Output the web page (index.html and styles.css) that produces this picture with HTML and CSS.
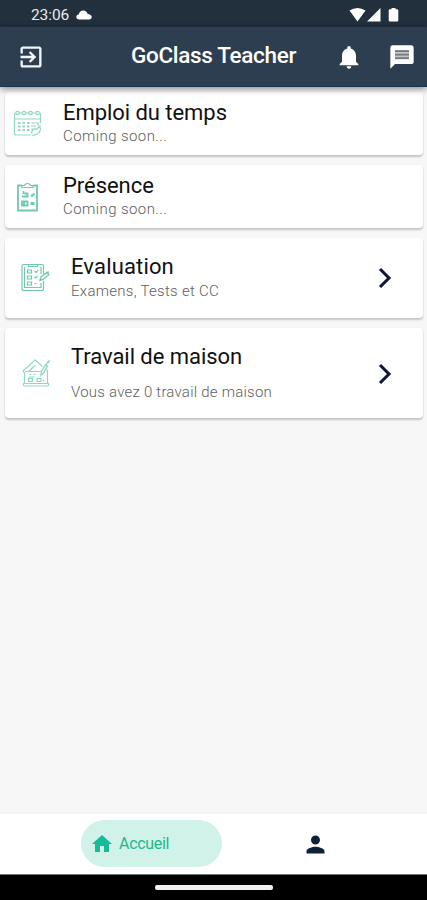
FILE: index.html
```html
<!DOCTYPE html>
<html lang="fr">
<head>
<meta charset="utf-8">
<title>GoClass Teacher</title>
<link rel="stylesheet" href="styles.css">
</head>
<body>
<div class="screen">
  <div class="status">
    <span class="clock">23:06</span>
    <svg class="cloud" viewBox="0 0 16 10"><path d="M3.3 9.5C1.5 9.5.3 8.500.3 7 .3 5.700 1.300 4.700 2.700 4.500 3.300 2 5 .500 7.300.500c2.200 0 3.800 1.400 4.300 3.400 2.300.1 4.100 1.200 4.100 3.100 0 1.500-1 2.500-2.600 2.500z"/></svg>
    <svg class="signals" viewBox="0 0 50 16"><path d="M.5 3.500Q8.500-1.500 16.500 3.500L8.500 14.500zM31.500 1v13.500H18zM41 2.300h1.500V1h4v1.300h1.500q1.300 0 1.300 1.300v9.600q0 1.300-1.300 1.300h-7q-1.300 0-1.300-1.300V3.600q0-1.300 1.300-1.300z"/></svg>
  </div>
  <header class="appbar">
    <svg class="icon exit" viewBox="0 0 24 24"><path d="M10.090 15.590L11.500 17l5-5-5-5-1.410 1.410L12.670 11H3v2h9.670l-2.580 2.590zM19 3H5c-1.110 0-2 .9-2 2v4h2V5h14v14H5v-4H3v4c0 1.100.89 2 2 2h14c1.100 0 2-.9 2-2V5c0-1.100-.9-2-2-2z"/></svg>
    <h1>GoClass Teacher</h1>
    <svg class="icon bell" viewBox="0 0 24 24"><path d="M12 22c1.100 0 2-.9 2-2h-4c0 1.100.89 2 2 2zm6-6v-5c0-3.070-1.640-5.640-4.500-6.320V4c0-.83-.67-1.500-1.500-1.500s-1.500.67-1.500 1.500v.68C7.630 5.360 6 7.920 6 11v5l-2 2v1h16v-1l-2-2z"/></svg>
    <svg class="icon" viewBox="0 0 24 24"><path d="M20 2H4c-1.100 0-2 .9-2 2v18l4-4h14c1.100 0 2-.9 2-2V4c0-1.100-.9-2-2-2z"/><path class="lines" d="M6 6h12v8H6z"/><path class="rules" d="M6 7h12M6 10h12M6 13h12"/></svg>
  </header>
  <main>
    <section class="card small">
      <svg class="art" viewBox="0 0 30 30"><g class="faint"><path d="M27.500 14V6q0-2-1-2M2.500 4q-1 0-1 2v18q0 2 2 2h14M1.500 10h26M6 4h3.500M12.500 4H16M19 4h3.500"/><circle cx="4.500" cy="4" r="1.700"/><circle cx="11" cy="4" r="1.700"/><circle cx="17.500" cy="4" r="1.700"/><circle cx="24.500" cy="4" r="1.700"/><path d="M18 14h7v3M18 17h5M18 20h2M26.500 17.500q2 3-.5 6-2.500 3.500-7 2.500M18.500 24.500q0-3 3-5l2 1 4-4"/><path class="dots" d="M5 14h12M5 17.500h12M5 21h12"/></g></svg>
      <div class="text"><h2>Emploi du temps</h2><p class="soon">Coming soon...</p></div>
    </section>
    <section class="card small">
      <svg class="art" viewBox="0 0 30 30"><g class="mid"><path class="frame" d="M9 3.500H5v25h19v-25H20"/><path d="M9 3.500v2h11v-2h-2.500q-.5-2-3-2t-3 2z"/><path class="bold" d="M9 14.500h5.500v-3h-3M10.500 9v3M9 23.500h5.500v-4H9zM11 19v4M18 13l1 1 2.500-2.500M18.500 21h2v1h-2z"/></g></svg>
      <div class="text"><h2>Présence</h2><p class="soon">Coming soon...</p></div>
    </section>
    <section class="card evaluation">
      <svg class="art" viewBox="0 0 30 30"><g class="mid"><path d="M23.500 12V4.500q0-2-2-2H4q-2 0-2 2v22q0 2 2 2h17.500q2 0 2-2V19M4.500 5v20.500h16.500V21M21 12V5M8.500 2v2.500h9V2"/><path d="M7.500 8h4v3h-4zM7.500 14h4v3h-4zM7.500 20h4v3h-4zM14.500 9l1.500 1.500L18 8M14.500 15l1 1 2-2M14.500 21.500h2"/><path class="pen" d="M20 18.500l1-3.500 6-4.500 1.800 2-5.800 5zM27 10.500l2-.5"/></g></svg>
      <div class="text"><h2>Evaluation</h2><p class="exams">Examens, Tests et CC</p></div>
      <svg class="chevron" viewBox="0 0 14 22"><path d="M2 2l9 9-9 9"/></svg>
    </section>
    <section class="card homework">
      <svg class="art" viewBox="0 0 30 30"><g class="faint"><path d="M3 14.500L2 13 14 2l7.500 6.500M4 13.500h17M3.500 14.500v11M26.500 12v13.500M2.500 25.500h25v1.500q0 1-1.500 1H4q-1.500 0-1.500-1zM8 13L14 7.500"/><path d="M8.500 16.500h2M12.500 16.500h2M7.500 23.500v-3h4v3zM16 23.500v-3h4v3zM22.500 23.500v-2M7.500 19h6"/><path class="pen" d="M20 17l.5-3.500 4-6.500 2 1-4 7zM25 7l2.500-4M28.500 2l-1 3M24 12l2-1"/></g></svg>
      <div class="text"><h2>Travail de maison</h2><p class="count">Vous avez 0 travail de maison</p></div>
      <svg class="chevron" viewBox="0 0 14 22"><path d="M2 2l9 9-9 9"/></svg>
    </section>
  </main>
  <nav>
    <div class="pill"><svg viewBox="0 0 24 24"><path d="M10 20v-6h4v6h5v-8h3L12 3 2 12h3v8z"/></svg><span>Accueil</span></div>
    <svg class="person" viewBox="0 0 24 24"><path d="M12 12c2.210 0 4-1.790 4-4s-1.790-4-4-4-4 1.790-4 4 1.790 4 4 4zm0 2c-2.670 0-8 1.340-8 4v2h16v-2c0-2.660-5.330-4-8-4z"/></svg>
  </nav>
  <div class="gesture"><div class="handle"></div></div>
</div>
</body>
</html>
```
FILE: styles.css
```css
* { box-sizing: border-box; }
body { margin: 0; font-family: Roboto, "Liberation Sans", sans-serif; }
h1, h2, p { margin: 0; font-weight: 400; white-space: nowrap; }
svg { display: block; flex: none; }
.screen { width: 427px; height: 900px; display: flex; flex-direction: column; background: #f7f7f7; overflow: hidden; }
.status { height: 27px; flex: none; background: #22303d; display: flex; align-items: center; padding: 2px 28px 0 31px; color: #e8ecef; }
.clock { font-size: 15.5px; line-height: 18px; letter-spacing: -.1px; width: 45px; }
.cloud { width: 16px; height: 10px; fill: #fff; }
.signals { width: 50px; height: 16px; margin-left: auto; fill: #fff; }
.appbar { height: 60px; flex: none; position: relative; z-index: 1; display: flex; align-items: center; padding: 0 11px 0 17px; background: #2d3e50; border-bottom: 1px solid #173650; box-shadow: 0 2px 7px rgba(0,0,0,.45); color: #fff; }
.icon { width: 28px; height: 28px; fill: #fff; }
.exit { fill: #f1f6ff; }
.lines { fill: #c4c5c6; }
.rules { stroke: #76797c; stroke-width: 1.5; }
h1 { font-size: 22.5px; line-height: 28px; font-weight: 500; letter-spacing: -.33px; margin: -3px 0 0 86px; }
.bell { margin: 0 25px 0 auto; }
main { flex: 1; display: flex; flex-direction: column; gap: 10px; padding: 5px 4px 0 5px; }
.card { background: #fff; border-radius: 4px; box-shadow: 0 2px 2px rgba(0,0,0,.2), 0 0 2px rgba(0,0,0,.05); display: flex; align-items: flex-start; }
.small { height: 63px; padding-left: 8px; }
.evaluation { height: 80px; padding-left: 15px; }
.homework { height: 90px; padding-left: 16px; }
.art { width: 30px; height: 30px; fill: none; stroke: #4bbd9c; stroke-width: 1.2; }
.small .art { margin-top: 17px; }
.evaluation .art { margin-top: 24px; }
.homework .art { margin-top: 30px; }
.faint { opacity: .6; }
.mid { opacity: .8; }
.dots { stroke-width: 2; stroke-dasharray: 2.5 2; }
.frame { stroke-width: 1.8; }
.bold { stroke-width: 1.8; }
.pen { stroke-width: 1.4; }
.text { flex: 1; }
.small .text { margin-left: 20px; padding-top: 7px; }
.evaluation .text { margin-left: 21px; padding-top: 15px; }
.homework .text { margin-left: 20px; padding-top: 15px; }
h2 { font-size: 22px; line-height: 28px; letter-spacing: -.05px; color: #111; }
.evaluation h2 { letter-spacing: .15px; }
p { font-size: 15px; line-height: 20px; color: #606060; font-weight: 300; }
.soon { letter-spacing: .42px; }
.exams { letter-spacing: .28px; }
.count { letter-spacing: .23px; margin-top: 11px; }
.small p { margin-top: -1px; }
.chevron { width: 14px; height: 22px; margin-right: 31.5px; fill: none; stroke: #0c1734; stroke-width: 3; }
.evaluation .chevron { margin-top: 29px; }
.homework .chevron { margin-top: 35px; }
nav { height: 61px; flex: none; display: flex; align-items: flex-start; padding: 6px 0 0 81px; background: #fff; border-bottom: 1px solid #777; box-shadow: 0 -1px 2px rgba(0,0,0,.04); }
.pill { width: 141px; height: 47px; border-radius: 24px; background: #d1f2e9; display: flex; align-items: center; padding-left: 9px; color: #22b68f; font-size: 16px; letter-spacing: -.3px; }
.pill svg { width: 24px; height: 24px; fill: #18bb98; margin-right: 5px; }
.person { width: 27px; height: 27px; margin: 11px 0 0 79.5px; fill: #0c2239; }
.gesture { height: 25px; flex: none; background: #000; display: flex; justify-content: center; padding-top: 10px; }
.handle { width: 118px; height: 5px; border-radius: 2px; background: #f2f0f2; }
```
